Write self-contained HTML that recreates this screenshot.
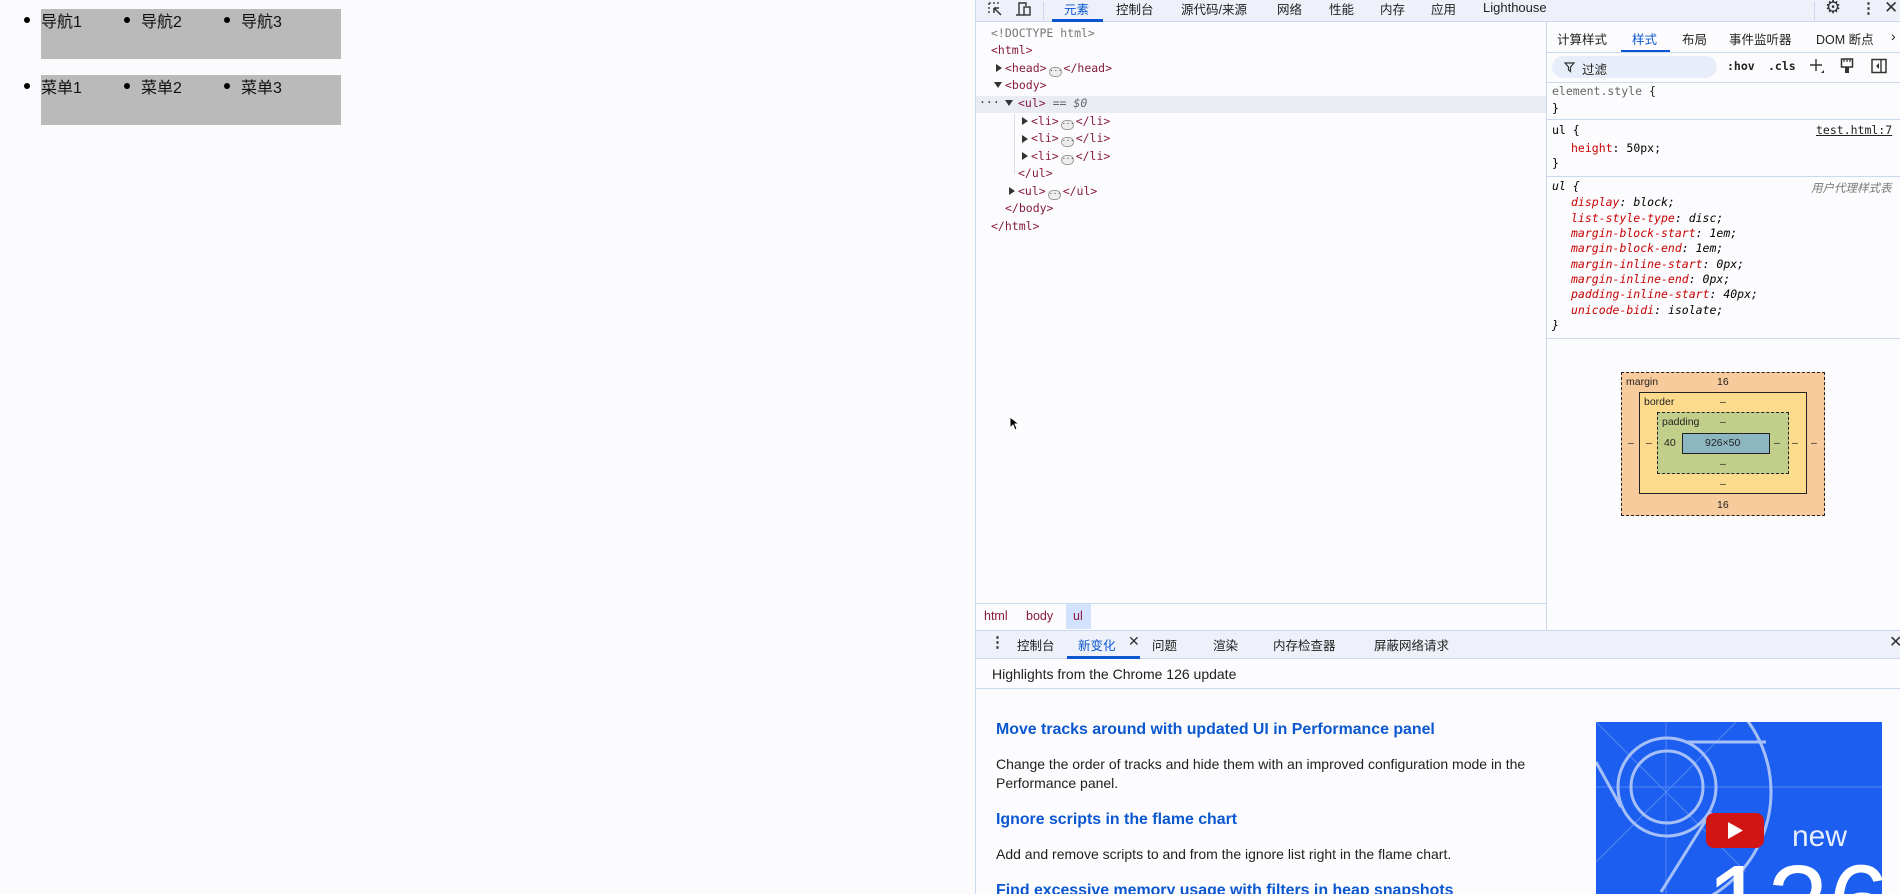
<!DOCTYPE html>
<html style="overflow:hidden;width:1900px;height:894px"><head><meta charset="utf-8">
<style>
*{margin:0;padding:0;box-sizing:border-box}
body{width:1900px;height:894px;overflow:hidden;background:#fbfbfe;font-family:"Liberation Sans","Noto Sans CJK SC",sans-serif;position:relative}
.a{position:absolute;white-space:nowrap}
.nav{position:absolute;left:41px;width:300px;height:50px;background:#bababa}
.li{position:absolute;font-size:16px;color:#111}
.dot{position:absolute;width:6px;height:6px;border-radius:50%;background:#000}
.m{font-family:"DejaVu Sans Mono","Liberation Mono",monospace;font-size:11.5px}
.t{color:#881b3f}
.ui{font-size:12.5px;color:#1f1f1f;font-family:"Liberation Sans","Noto Sans CJK SC",sans-serif}
.tri{position:absolute;width:0;height:0;border-left:6px solid #333;border-top:4px solid transparent;border-bottom:4px solid transparent}
.trd{position:absolute;width:0;height:0;border-top:6px solid #333;border-left:4px solid transparent;border-right:4px solid transparent}
.ell{display:inline-block;width:13px;height:10px;border:1px solid #999;border-radius:5px;vertical-align:-1px;font-size:7px;line-height:6px;text-align:center;color:#333;background:#eee;margin:0 2px}
.p{color:#c80000}
.it{font-style:italic}
.hl{position:absolute;height:1px;background:#cbd8f0}
.vl{position:absolute;width:1px;background:#cbd8f0}
h3{position:absolute;font-size:15.9px;color:#0b57d0;font-weight:bold;white-space:nowrap}
.pp{position:absolute;font-size:14px;color:#1f1f1f;line-height:19px}
#clip{position:absolute;left:0;top:0;width:1900px;height:894px;overflow:hidden}
</style></head><body><div id="clip">

<!-- page -->
<div class="nav" style="top:9px"></div>
<div class="nav" style="top:75px"></div>
<div class="dot" style="left:24px;top:17px"></div><div class="li" style="left:41px;top:8px">导航1</div>
<div class="dot" style="left:124px;top:17px"></div><div class="li" style="left:141px;top:8px">导航2</div>
<div class="dot" style="left:224px;top:17px"></div><div class="li" style="left:241px;top:8px">导航3</div>
<div class="dot" style="left:24px;top:83px"></div><div class="li" style="left:41px;top:74px">菜单1</div>
<div class="dot" style="left:124px;top:83px"></div><div class="li" style="left:141px;top:74px">菜单2</div>
<div class="dot" style="left:224px;top:83px"></div><div class="li" style="left:241px;top:74px">菜单3</div>

<!-- devtools bg -->
<div class="a" style="left:975px;top:0;width:925px;height:894px;background:#fcfcff;border-left:1px solid #cbd8f0"></div>
<!-- top toolbar -->
<div class="a" style="left:976px;top:0;width:924px;height:22px;background:#eef1f9;border-bottom:1px solid #cbd8f0"></div>
<svg class="a" style="left:987px;top:1px" width="16" height="16" viewBox="0 0 16 16"><path d="M2 2h2M6 2h2M10 2h2M2 2v2M2 6v2M2 10v2" stroke="#333" stroke-width="1.3" fill="none"/><path d="M7 7l7 7M7 7v5M7 7h5" stroke="#333" stroke-width="1.5" fill="none"/></svg>
<svg class="a" style="left:1015px;top:1px" width="18" height="16" viewBox="0 0 18 16"><path d="M4 14V2h7v3" stroke="#333" stroke-width="1.4" fill="none"/><rect x="9" y="6" width="6" height="8" stroke="#333" stroke-width="1.4" fill="none"/><path d="M1 14h8" stroke="#333" stroke-width="1.4"/></svg>
<div class="vl" style="left:1043px;top:2px;height:18px"></div>
<div class="a ui" style="left:1064px;top:-1px;color:#0b57d0">元素</div>
<div class="a" style="left:1052px;top:19px;width:51px;height:3px;background:#0b57d0"></div>
<div class="a ui" style="left:1116px;top:-1px">控制台</div>
<div class="a ui" style="left:1181px;top:-1px">源代码/来源</div>
<div class="a ui" style="left:1277px;top:-1px">网络</div>
<div class="a ui" style="left:1329px;top:-1px">性能</div>
<div class="a ui" style="left:1380px;top:-1px">内存</div>
<div class="a ui" style="left:1431px;top:-1px">应用</div>
<div class="a ui" style="left:1483px;top:0px;font-size:13px">Lighthouse</div>
<div class="vl" style="left:1814px;top:2px;height:18px"></div>
<div class="a" style="left:1825px;top:-3px;font-size:18px;color:#333">⚙</div>
<div class="a" style="left:1861px;top:-1px;font-size:15px;color:#333;font-weight:bold">⋮</div>
<div class="a" style="left:1884px;top:-2px;font-size:17px;color:#333">✕</div>

<!-- elements tree -->
<div class="a" style="left:976px;top:96px;width:570px;height:17px;background:#e9ecf3"></div>
<div class="vl" style="left:1014px;top:114px;height:60px;background:#d6dbe6"></div>
<div class="a m" style="left:991px;top:26px;color:#777">&lt;!DOCTYPE html&gt;</div>
<div class="a m t" style="left:991px;top:43px">&lt;html&gt;</div>
<div class="tri" style="left:996px;top:64px"></div><div class="a m t" style="left:1005px;top:61px">&lt;head&gt;<span class="ell">···</span>&lt;/head&gt;</div>
<div class="trd" style="left:994px;top:82px"></div><div class="a m t" style="left:1005px;top:78px">&lt;body&gt;</div>
<div class="a m" style="left:979px;top:95px;color:#333">···</div>
<div class="trd" style="left:1005px;top:100px"></div><div class="a m t" style="left:1018px;top:96px">&lt;ul&gt; <span style="color:#666">==</span> <span style="color:#666;font-style:italic">$0</span></div>
<div class="tri" style="left:1022px;top:117px"></div><div class="a m t" style="left:1031px;top:114px">&lt;li&gt;<span class="ell">···</span>&lt;/li&gt;</div>
<div class="tri" style="left:1022px;top:135px"></div><div class="a m t" style="left:1031px;top:131px">&lt;li&gt;<span class="ell">···</span>&lt;/li&gt;</div>
<div class="tri" style="left:1022px;top:152px"></div><div class="a m t" style="left:1031px;top:149px">&lt;li&gt;<span class="ell">···</span>&lt;/li&gt;</div>
<div class="a m t" style="left:1018px;top:166px">&lt;/ul&gt;</div>
<div class="tri" style="left:1009px;top:187px"></div><div class="a m t" style="left:1018px;top:184px">&lt;ul&gt;<span class="ell">···</span>&lt;/ul&gt;</div>
<div class="a m t" style="left:1005px;top:201px">&lt;/body&gt;</div>
<div class="a m t" style="left:991px;top:219px">&lt;/html&gt;</div>

<!-- cursor -->
<svg class="a" style="left:1009px;top:416px" width="10" height="15" viewBox="0 0 10 15"><path d="M1 1v11l3-3 2 5 2-1-2-5h4z" fill="#000" stroke="#fff" stroke-width="1"/></svg>

<!-- breadcrumb -->
<div class="hl" style="left:976px;top:603px;width:570px"></div>
<div class="a" style="left:1066px;top:604px;width:25px;height:25px;background:#d3e3fd"></div>
<div class="a ui" style="left:984px;top:609px;color:#881b3f">html</div>
<div class="a ui" style="left:1026px;top:609px;color:#881b3f">body</div>
<div class="a ui" style="left:1073px;top:609px;color:#881b3f">ul</div>

<!-- sidebar -->
<div class="vl" style="left:1546px;top:22px;height:608px"></div>
<div class="hl" style="left:1547px;top:52px;width:353px"></div>
<div class="a ui" style="left:1557px;top:29px">计算样式</div>
<div class="a ui" style="left:1632px;top:29px;color:#0b57d0">样式</div>
<div class="a" style="left:1621px;top:50px;width:49px;height:2px;background:#0b57d0"></div>
<div class="a ui" style="left:1682px;top:29px">布局</div>
<div class="a ui" style="left:1729px;top:29px">事件监听器</div>
<div class="a ui" style="left:1816px;top:29px">DOM 断点</div>
<div class="a ui" style="left:1891px;top:28px;font-size:14px">›</div>
<div class="a" style="left:1552px;top:56px;width:165px;height:22px;border-radius:11px;background:#e8eef9"></div>
<svg class="a" style="left:1564px;top:62px" width="11" height="11" viewBox="0 0 11 11"><path d="M1 1h9L6.5 5v4.5L4.5 8V5z" fill="none" stroke="#333" stroke-width="1.2"/></svg>
<div class="a ui" style="left:1582px;top:59px">过滤</div>
<div class="a m" style="left:1727px;top:59px;font-weight:bold;color:#222">:hov</div>
<div class="a m" style="left:1768px;top:59px;font-weight:bold;color:#222">.cls</div>
<svg class="a" style="left:1809px;top:58px" width="16" height="16" viewBox="0 0 16 16"><path d="M7 1v12M1 7h12" stroke="#333" stroke-width="1.4"/><path d="M15 12v3h-3z" fill="#333"/></svg>
<svg class="a" style="left:1840px;top:58px" width="14" height="16" viewBox="0 0 14 16"><rect x="1.5" y="1" width="11" height="8" fill="none" stroke="#333" stroke-width="1.5"/><path d="M4 1v3M7 1v3M10 1v3" stroke="#333" stroke-width="1.2"/><rect x="5" y="9" width="4" height="6" fill="#333"/></svg>
<svg class="a" style="left:1871px;top:58px" width="16" height="16" viewBox="0 0 16 16"><rect x="1" y="1.5" width="14" height="13" fill="none" stroke="#333" stroke-width="1.5"/><path d="M10 2v12" stroke="#333" stroke-width="1.4"/><path d="M8 5v6l-3-3z" fill="#333"/></svg>
<div class="hl" style="left:1547px;top:82px;width:353px"></div>
<div class="a m" style="left:1552px;top:84px;color:#666">element.style <span style="color:#222">{</span></div>
<div class="a m" style="left:1552px;top:101px">}</div>
<div class="hl" style="left:1547px;top:119px;width:353px"></div>
<div class="a m" style="left:1552px;top:123px">ul {</div>
<div class="a m" style="left:1816px;top:123px;text-decoration:underline;color:#222">test.html:7</div>
<div class="a m" style="left:1571px;top:141px"><span class="p">height</span>: 50px;</div>
<div class="a m" style="left:1552px;top:156px">}</div>
<div class="hl" style="left:1547px;top:176px;width:353px"></div>
<div class="a m it" style="left:1552px;top:179px">ul {</div>
<div class="a ui it" style="left:1811px;top:180px;font-size:11.5px;color:#777">用户代理样式表</div>
<div class="a m it" style="left:1571px;top:195px"><span class="p">display</span>: block;</div>
<div class="a m it" style="left:1571px;top:211px"><span class="p">list-style-type</span>: disc;</div>
<div class="a m it" style="left:1571px;top:226px"><span class="p">margin-block-start</span>: 1em;</div>
<div class="a m it" style="left:1571px;top:241px"><span class="p">margin-block-end</span>: 1em;</div>
<div class="a m it" style="left:1571px;top:257px"><span class="p">margin-inline-start</span>: 0px;</div>
<div class="a m it" style="left:1571px;top:272px"><span class="p">margin-inline-end</span>: 0px;</div>
<div class="a m it" style="left:1571px;top:287px"><span class="p">padding-inline-start</span>: 40px;</div>
<div class="a m it" style="left:1571px;top:303px"><span class="p">unicode-bidi</span>: isolate;</div>
<div class="a m it" style="left:1552px;top:318px">}</div>
<div class="hl" style="left:1547px;top:338px;width:353px"></div>

<!-- box model -->
<div class="a" style="left:1621px;top:372px;width:204px;height:144px;background:#f8cb9c;border:1px dashed #222"></div>
<div class="a" style="left:1639px;top:392px;width:168px;height:102px;background:#fcdb8d;border:1px solid #222"></div>
<div class="a" style="left:1657px;top:412px;width:132px;height:62px;background:#c2cf8a;border:1px dashed #222"></div>
<div class="a" style="left:1682px;top:433px;width:88px;height:21px;background:#8cb6c0;border:1px solid #222"></div>
<div class="a" style="font-size:10.5px;color:#222;left:1626px;top:376px">margin</div>
<div class="a" style="font-size:10.5px;color:#222;left:1717px;top:376px">16</div>
<div class="a" style="font-size:10.5px;color:#222;left:1644px;top:396px">border</div>
<div class="a" style="font-size:10.5px;color:#222;left:1720px;top:396px">–</div>
<div class="a" style="font-size:10.5px;color:#222;left:1662px;top:416px">padding</div>
<div class="a" style="font-size:10.5px;color:#222;left:1720px;top:416px">–</div>
<div class="a" style="font-size:10.5px;color:#222;left:1664px;top:437px">40</div>
<div class="a" style="font-size:10.5px;color:#222;left:1705px;top:437px">926×50</div>
<div class="a" style="font-size:10.5px;color:#222;left:1774px;top:437px">–</div>
<div class="a" style="font-size:10.5px;color:#222;left:1792px;top:437px">–</div>
<div class="a" style="font-size:10.5px;color:#222;left:1811px;top:437px">–</div>
<div class="a" style="font-size:10.5px;color:#222;left:1628px;top:437px">–</div>
<div class="a" style="font-size:10.5px;color:#222;left:1646px;top:437px">–</div>
<div class="a" style="font-size:10.5px;color:#222;left:1720px;top:458px">–</div>
<div class="a" style="font-size:10.5px;color:#222;left:1720px;top:478px">–</div>
<div class="a" style="font-size:10.5px;color:#222;left:1717px;top:499px">16</div>

<!-- drawer -->
<div class="a" style="left:976px;top:630px;width:924px;height:29px;background:#eef1f9;border-top:1px solid #cbd8f0;border-bottom:1px solid #cbd8f0"></div>
<div class="a" style="left:990px;top:633px;font-size:15px;font-weight:bold;color:#333">⋮</div>
<div class="a ui" style="left:1017px;top:635px">控制台</div>
<div class="a ui" style="left:1078px;top:635px;color:#0b57d0">新变化</div>
<div class="a" style="left:1128px;top:633px;font-size:14px;color:#333">✕</div>
<div class="a" style="left:1067px;top:656px;width:73px;height:3px;background:#0b57d0"></div>
<div class="a ui" style="left:1152px;top:635px">问题</div>
<div class="a ui" style="left:1213px;top:635px">渲染</div>
<div class="a ui" style="left:1273px;top:635px">内存检查器</div>
<div class="a ui" style="left:1374px;top:635px">屏蔽网络请求</div>
<div class="a" style="left:1889px;top:632px;font-size:16px;color:#333">✕</div>
<div class="a" style="left:992px;top:666px;font-size:14px;color:#1f1f1f">Highlights from the Chrome 126 update</div>
<div class="hl" style="left:976px;top:688px;width:924px"></div>

<h3 style="left:996px;top:721px">Move tracks around with updated UI in Performance panel</h3>
<div class="pp" style="left:996px;top:755px">Change the order of tracks and hide them with an improved configuration mode in the<br>Performance panel.</div>
<h3 style="left:996px;top:811px">Ignore scripts in the flame chart</h3>
<div class="pp" style="left:996px;top:845px">Add and remove scripts to and from the ignore list right in the flame chart.</div>
<h3 style="left:996px;top:882px;height:12px;overflow:hidden;line-height:18px">Find excessive memory usage with filters in heap snapshots</h3>

<svg class="a" style="left:1596px;top:722px" width="286" height="172" viewBox="0 0 286 172">
<rect width="286" height="172" fill="#1c5ef0"/>
<g stroke="#8fb0f8" stroke-width="1" opacity="0.5"><path d="M0 65h286M70 0v172M0 0l150 150M140 0L0 140"/></g>
<g fill="none" stroke="#a5c0f8" stroke-width="3">
<circle cx="71" cy="65" r="36"/><circle cx="71" cy="65" r="49"/><circle cx="55" cy="70" r="120"/>
<path d="M90 20h80M0 40l25 45M115 90l-50 80"/></g>
<rect x="110" y="91" width="58" height="35" rx="8" fill="#d11414"/>
<path d="M132 100v17l15-8.5z" fill="#fff"/>
<text x="196" y="124" font-family="Liberation Sans,sans-serif" font-size="30" fill="#e6eefc">new</text>
<text x="110" y="220" font-family="Liberation Sans,sans-serif" font-size="110" fill="#fff">126</text>
</svg>
</div></body></html>
